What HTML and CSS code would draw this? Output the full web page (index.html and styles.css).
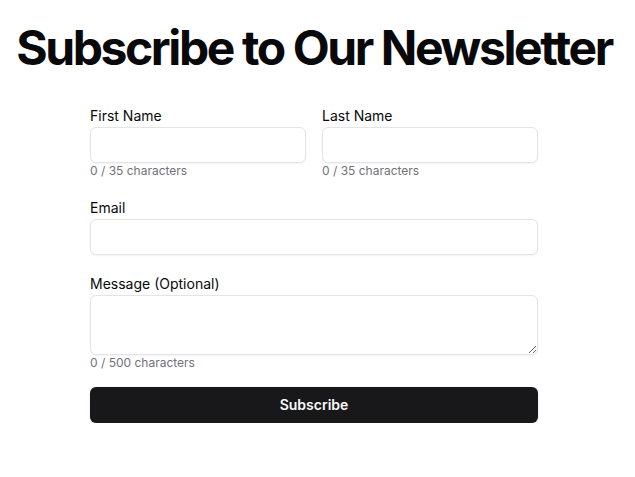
FILE: index.html
```html
<!DOCTYPE html>
<html lang="en">
<head>
<meta charset="utf-8">
<title>Subscribe to Our Newsletter</title>
<link rel="stylesheet" href="styles.css">
</head>
<body>
<main class="page">
  <h1 class="title">Subscribe to Our Newsletter</h1>
  <form class="form">
    <div class="row">
      <div class="field">
        <label class="label" for="first">First Name</label>
        <input class="input" id="first" type="text">
        <p class="count">0 / 35 characters</p>
      </div>
      <div class="field">
        <label class="label" for="last">Last Name</label>
        <input class="input" id="last" type="text">
        <p class="count">0 / 35 characters</p>
      </div>
    </div>
    <div class="field">
      <label class="label" for="email">Email</label>
      <input class="input" id="email" type="email">
    </div>
    <div class="field field-message">
      <label class="label" for="msg">Message (Optional)</label>
      <textarea class="input textarea" id="msg"></textarea>
      <p class="count">0 / 500 characters</p>
    </div>
    <button class="button" type="button">Subscribe</button>
  </form>
</main>
</body>
</html>
```
FILE: styles.css
```css
* { box-sizing: border-box; }
html, body { margin: 0; padding: 0; background: #ffffff; }
body {
  font-family: Inter, "Noto Sans", sans-serif;
  color: #09090b;
}
.page {
  width: 628px;
  display: flex;
  flex-direction: column;
  align-items: center;
  padding-top: 24px;
}
.title {
  margin: 0;
  font-size: 48px;
  line-height: 48px;
  font-weight: 700;
  letter-spacing: -0.05em;
  white-space: nowrap;
}
.form {
  width: 448px;
  margin-top: 37px;
  display: flex;
  flex-direction: column;
  gap: 22px;
}
.row {
  display: grid;
  grid-template-columns: 1fr 1fr;
  gap: 16px;
}
.field {
  display: flex;
  flex-direction: column;
}
.label {
  font-size: 14px;
  line-height: 14px;
  font-weight: 400;
  margin-bottom: 4px;
}
.input {
  display: block;
  width: 100%;
  height: 36px;
  border: 1px solid #e4e4e7;
  border-radius: 6px;
  background: #ffffff;
  box-shadow: 0 1px 2px rgba(0, 0, 0, 0.05);
  font-family: inherit;
  font-size: 14px;
  padding: 4px 12px;
  margin: 0;
}
.textarea {
  height: 60px;
  resize: vertical;
}
.count {
  margin: 0;
  font-size: 12px;
  line-height: 16px;
  color: #71717a;
}
.field-message { margin-bottom: -6px; }
.button {
  height: 36px;
  border: none;
  border-radius: 6px;
  background: #18181b;
  color: #fafafa;
  font-family: inherit;
  font-size: 14px;
  line-height: 20px;
  font-weight: 600;
  padding: 8px 16px;
  box-shadow: 0 1px 3px rgba(0, 0, 0, 0.1);
}
```
